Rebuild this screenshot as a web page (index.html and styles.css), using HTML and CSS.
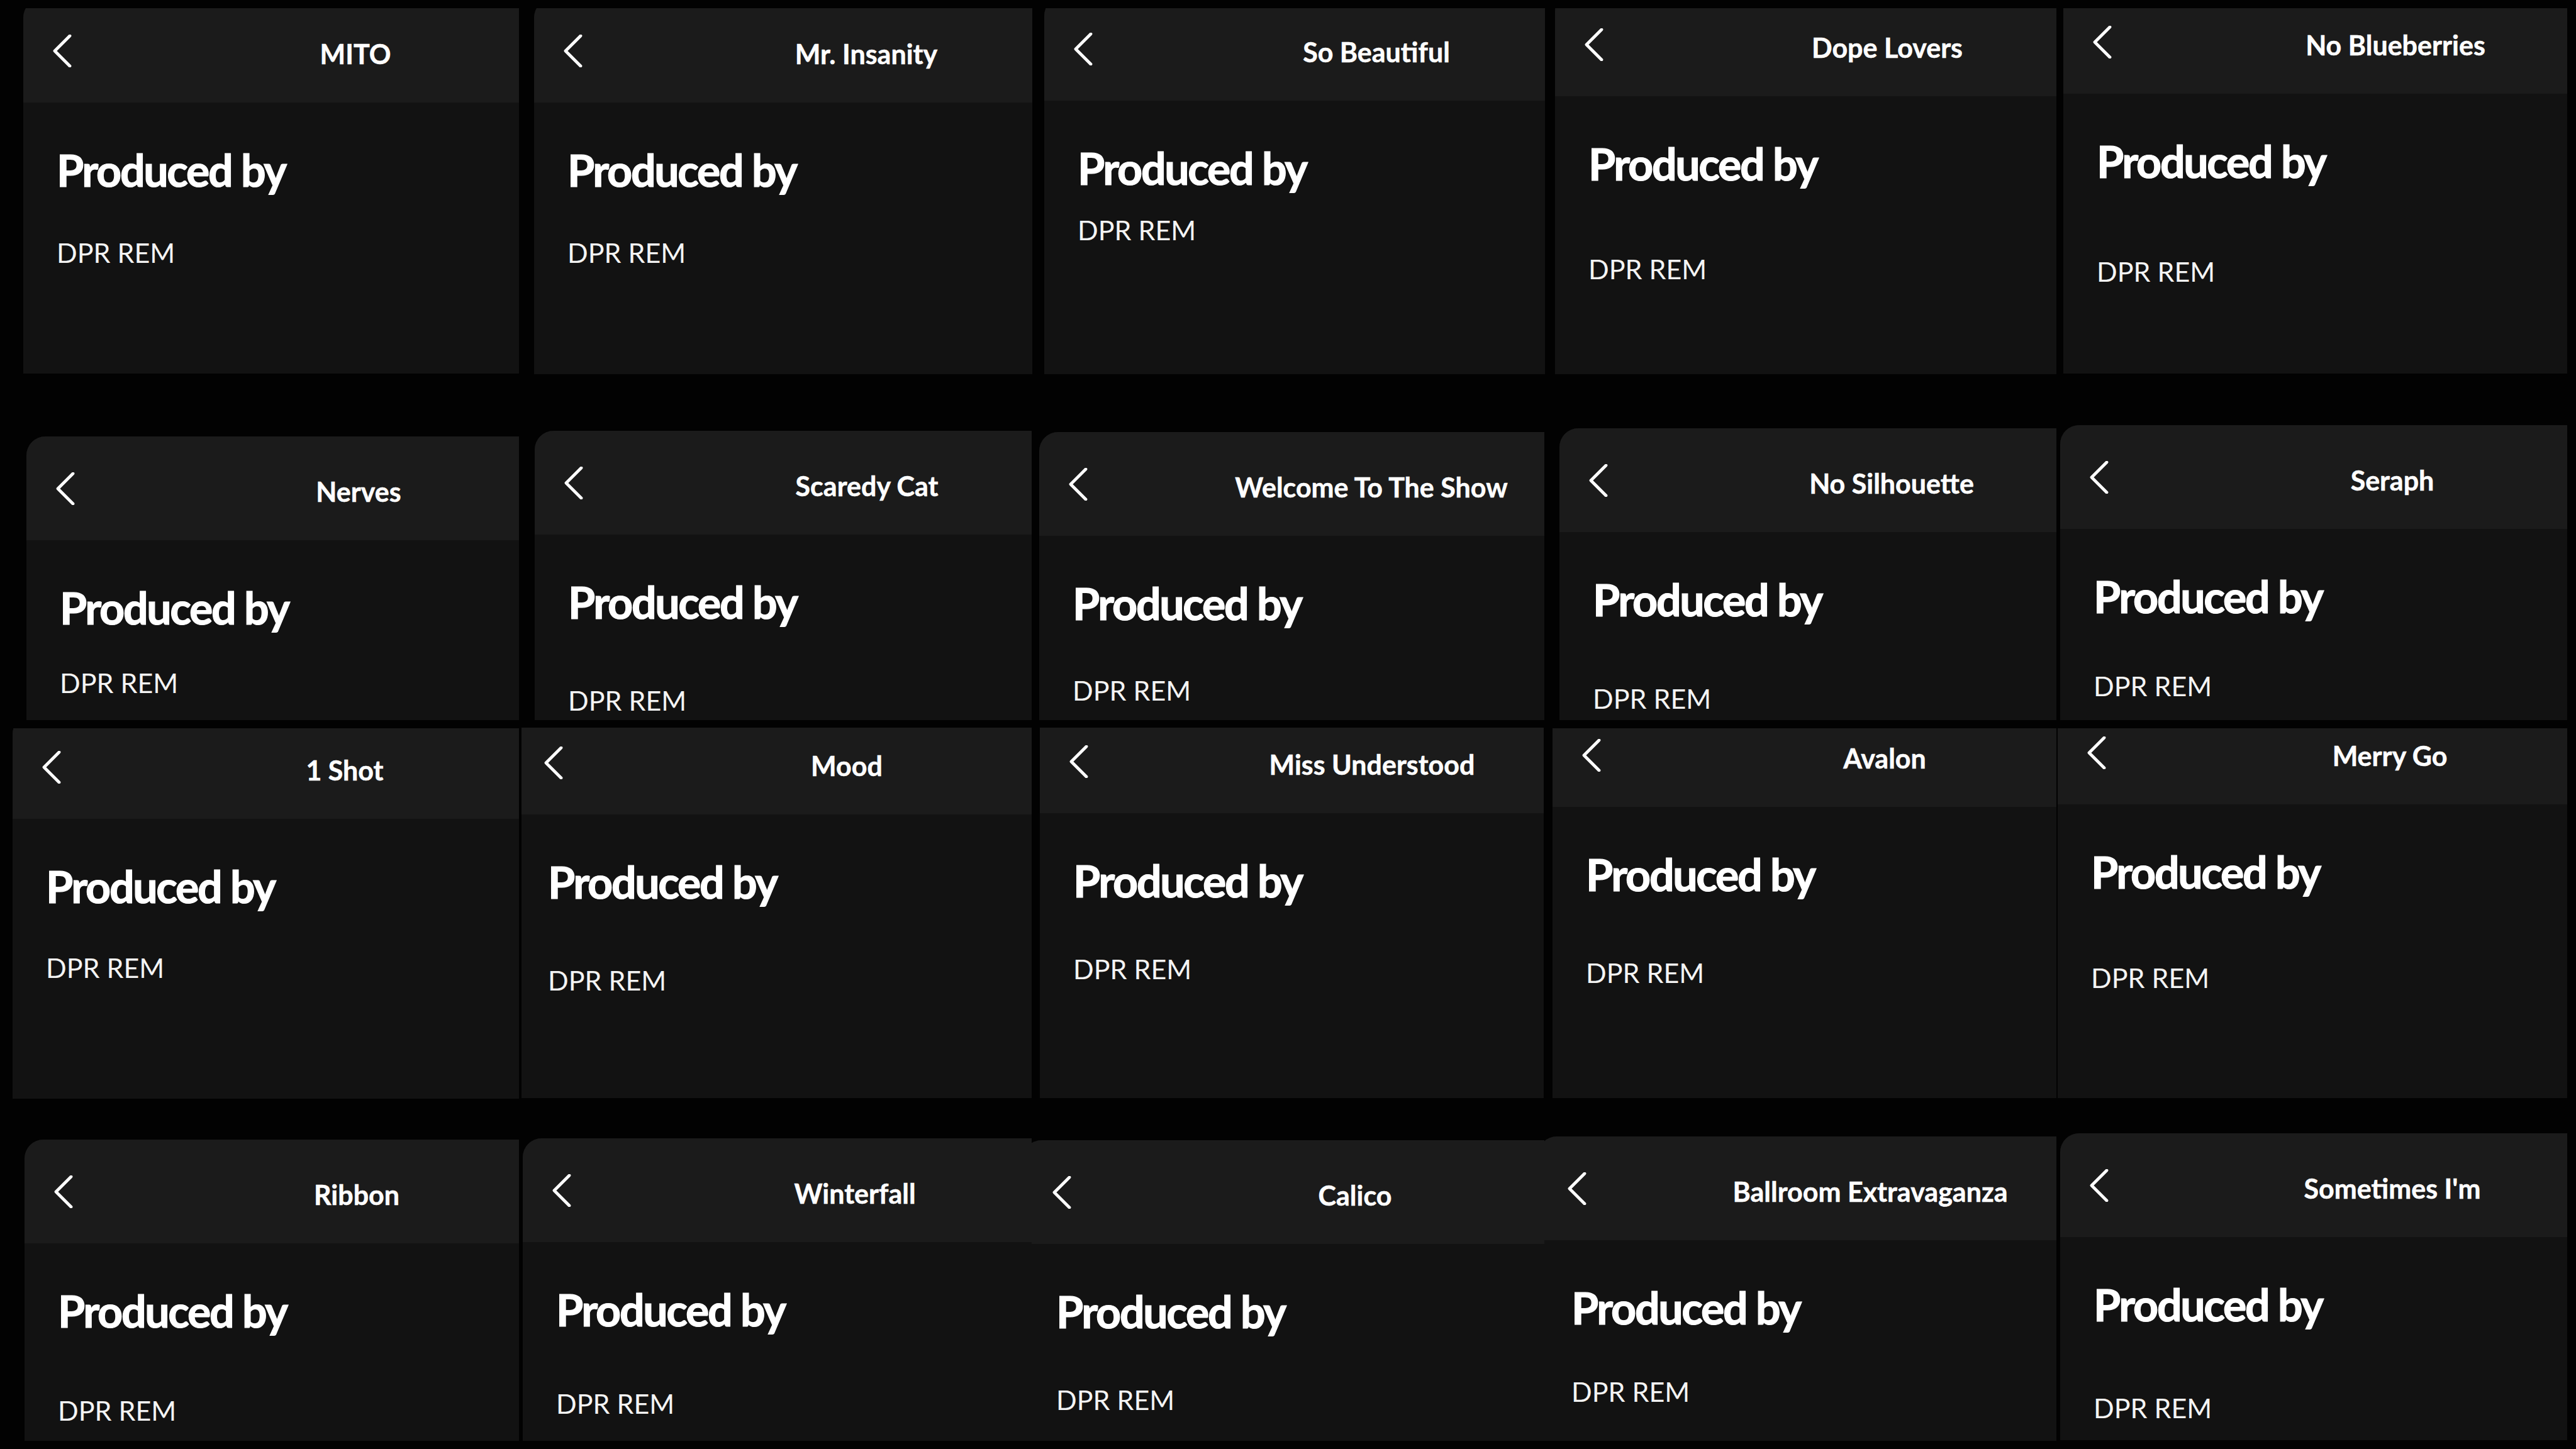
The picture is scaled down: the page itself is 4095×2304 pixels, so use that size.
FILE: index.html
```html
<!DOCTYPE html>
<html lang="en">
<head>
<meta charset="utf-8">
<title>Produced by — DPR REM</title>
<link rel="stylesheet" href="styles.css">
</head>
<body>
<main class="collage">
  <section class="shot" style="--x:37px;--y:13px;--w:788px;--h:581px;--cut-y:15px;--gap:90px">
    <div class="screen"><header class="bar"><svg class="back" viewBox="0 0 30 52"><polyline points="27,2 3,26 27,50"/></svg><h1 class="title">MITO</h1></header>
    <div class="content"><h2 class="heading">Produced by</h2><p class="credit">DPR REM</p></div></div>
  </section>
  <section class="shot" style="--x:849px;--y:13px;--w:792px;--h:582px;--cut-y:15px;--gap:90px">
    <div class="screen"><header class="bar"><svg class="back" viewBox="0 0 30 52"><polyline points="27,2 3,26 27,50"/></svg><h1 class="title">Mr. Insanity</h1></header>
    <div class="content"><h2 class="heading">Produced by</h2><p class="credit">DPR REM</p></div></div>
  </section>
  <section class="shot" style="--x:1660px;--y:13px;--w:796px;--h:582px;--cut-y:18px;--gap:57px">
    <div class="screen"><header class="bar"><svg class="back" viewBox="0 0 30 52"><polyline points="27,2 3,26 27,50"/></svg><h1 class="title">So Beautiful</h1></header>
    <div class="content"><h2 class="heading">Produced by</h2><p class="credit">DPR REM</p></div></div>
  </section>
  <section class="shot" style="--x:2472px;--y:13px;--w:797px;--h:582px;--cut-y:25px;--gap:126px">
    <div class="screen"><header class="bar"><svg class="back" viewBox="0 0 30 52"><polyline points="27,2 3,26 27,50"/></svg><h1 class="title">Dope Lovers</h1></header>
    <div class="content"><h2 class="heading">Produced by</h2><p class="credit">DPR REM</p></div></div>
  </section>
  <section class="shot" style="--x:3280px;--y:13px;--w:801px;--h:581px;--cut-y:29px;--gap:134px">
    <div class="screen"><header class="bar"><svg class="back" viewBox="0 0 30 52"><polyline points="27,2 3,26 27,50"/></svg><h1 class="title">No Blueberries</h1></header>
    <div class="content"><h2 class="heading">Produced by</h2><p class="credit">DPR REM</p></div></div>
  </section>

  <section class="shot" style="--x:42px;--y:694px;--w:783px;--h:451px;--gap:78px">
    <div class="screen"><header class="bar"><svg class="back" viewBox="0 0 30 52"><polyline points="27,2 3,26 27,50"/></svg><h1 class="title">Nerves</h1></header>
    <div class="content"><h2 class="heading">Produced by</h2><p class="credit">DPR REM</p></div></div>
  </section>
  <section class="shot" style="--x:850px;--y:685px;--w:790px;--h:460px;--gap:115px">
    <div class="screen"><header class="bar"><svg class="back" viewBox="0 0 30 52"><polyline points="27,2 3,26 27,50"/></svg><h1 class="title">Scaredy Cat</h1></header>
    <div class="content"><h2 class="heading">Produced by</h2><p class="credit">DPR REM</p></div></div>
  </section>
  <section class="shot" style="--x:1652px;--y:687px;--w:803px;--h:458px;--gap:97px">
    <div class="screen"><header class="bar"><svg class="back" viewBox="0 0 30 52"><polyline points="27,2 3,26 27,50"/></svg><h1 class="title">Welcome To The Show</h1></header>
    <div class="content"><h2 class="heading">Produced by</h2><p class="credit">DPR REM</p></div></div>
  </section>
  <section class="shot" style="--x:2479px;--y:681px;--w:790px;--h:464px;--gap:116px">
    <div class="screen"><header class="bar"><svg class="back" viewBox="0 0 30 52"><polyline points="27,2 3,26 27,50"/></svg><h1 class="title">No Silhouette</h1></header>
    <div class="content"><h2 class="heading">Produced by</h2><p class="credit">DPR REM</p></div></div>
  </section>
  <section class="shot" style="--x:3275px;--y:676px;--w:806px;--h:469px;--gap:101px">
    <div class="screen"><header class="bar"><svg class="back" viewBox="0 0 30 52"><polyline points="27,2 3,26 27,50"/></svg><h1 class="title">Seraph</h1></header>
    <div class="content"><h2 class="heading">Produced by</h2><p class="credit">DPR REM</p></div></div>
  </section>

  <section class="shot" style="--x:20px;--y:1158px;--w:805px;--h:589px;--cut-y:21px;--gap:88px">
    <div class="screen"><header class="bar"><svg class="back" viewBox="0 0 30 52"><polyline points="27,2 3,26 27,50"/></svg><h1 class="title">1 Shot</h1></header>
    <div class="content"><h2 class="heading">Produced by</h2><p class="credit">DPR REM</p></div></div>
  </section>
  <section class="shot" style="--x:829px;--y:1157px;--w:811px;--h:589px;--cut-x:11px;--cut-y:27px;--gap:115px">
    <div class="screen"><header class="bar"><svg class="back" viewBox="0 0 30 52"><polyline points="27,2 3,26 27,50"/></svg><h1 class="title">Mood</h1></header>
    <div class="content"><h2 class="heading">Produced by</h2><p class="credit">DPR REM</p></div></div>
  </section>
  <section class="shot" style="--x:1653px;--y:1157px;--w:801px;--h:589px;--cut-y:29px;--gap:99px">
    <div class="screen"><header class="bar"><svg class="back" viewBox="0 0 30 52"><polyline points="27,2 3,26 27,50"/></svg><h1 class="title">Miss Understood</h1></header>
    <div class="content"><h2 class="heading">Produced by</h2><p class="credit">DPR REM</p></div></div>
  </section>
  <section class="shot" style="--x:2468px;--y:1158px;--w:801px;--h:588px;--cut-y:40px;--gap:115px">
    <div class="screen"><header class="bar"><svg class="back" viewBox="0 0 30 52"><polyline points="27,2 3,26 27,50"/></svg><h1 class="title">Avalon</h1></header>
    <div class="content"><h2 class="heading">Produced by</h2><p class="credit">DPR REM</p></div></div>
  </section>
  <section class="shot" style="--x:3271px;--y:1158px;--w:810px;--h:588px;--cut-y:44px;--gap:127px">
    <div class="screen"><header class="bar"><svg class="back" viewBox="0 0 30 52"><polyline points="27,2 3,26 27,50"/></svg><h1 class="title">Merry Go</h1></header>
    <div class="content"><h2 class="heading">Produced by</h2><p class="credit">DPR REM</p></div></div>
  </section>

  <section class="shot" style="--x:39px;--y:1812px;--w:786px;--h:479px;--gap:117px">
    <div class="screen"><header class="bar"><svg class="back" viewBox="0 0 30 52"><polyline points="27,2 3,26 27,50"/></svg><h1 class="title">Ribbon</h1></header>
    <div class="content"><h2 class="heading">Produced by</h2><p class="credit">DPR REM</p></div></div>
  </section>
  <section class="shot" style="--x:831px;--y:1810px;--w:809px;--h:481px;--gap:108px">
    <div class="screen"><header class="bar"><svg class="back" viewBox="0 0 30 52"><polyline points="27,2 3,26 27,50"/></svg><h1 class="title">Winterfall</h1></header>
    <div class="content"><h2 class="heading">Produced by</h2><p class="credit">DPR REM</p></div></div>
  </section>
  <section class="shot" style="--x:1640px;--y:1813px;--w:815px;--h:478px;--cut-x:14px;--gap:99px">
    <div class="screen"><header class="bar"><svg class="back" viewBox="0 0 30 52"><polyline points="27,2 3,26 27,50"/></svg><h1 class="title">Calico</h1></header>
    <div class="content"><h2 class="heading">Produced by</h2><p class="credit">DPR REM</p></div></div>
  </section>
  <section class="shot" style="--x:2455px;--y:1807px;--w:814px;--h:484px;--cut-x:10px;--gap:92px">
    <div class="screen"><header class="bar"><svg class="back" viewBox="0 0 30 52"><polyline points="27,2 3,26 27,50"/></svg><h1 class="title">Ballroom Extravaganza</h1></header>
    <div class="content"><h2 class="heading">Produced by</h2><p class="credit">DPR REM</p></div></div>
  </section>
  <section class="shot" style="--x:3275px;--y:1802px;--w:806px;--h:488px;--gap:123px">
    <div class="screen"><header class="bar"><svg class="back" viewBox="0 0 30 52"><polyline points="27,2 3,26 27,50"/></svg><h1 class="title">Sometimes I'm</h1></header>
    <div class="content"><h2 class="heading">Produced by</h2><p class="credit">DPR REM</p></div></div>
  </section>
</main>
</body>
</html>
```

FILE: styles.css
```css
html, body {
  margin: 0;
  padding: 0;
  background: #020202;
}

body {
  width: 4095px;
  height: 2304px;
  overflow: hidden;
  font-family: Lato, "Liberation Sans", "DejaVu Sans", sans-serif;
  color: #ffffff;
}

.collage {
  position: relative;
  width: 4095px;
  height: 2304px;
  background: #020202;
}

/* each screenshot is pinned on the collage canvas */
.shot {
  position: absolute;
  left: var(--x);
  top: var(--y);
  width: var(--w);
  height: var(--h);
  overflow: hidden;
}

.screen {
  width: 1056px;
  height: 1000px;
  margin-left: calc(-1 * var(--cut-x, 0px));
  margin-top: calc(-1 * var(--cut-y, 0px));
  background: #121212;
  border-radius: 30px 30px 0 0;
  overflow: hidden;
}

.bar {
  height: 165px;
  background: #1b1b1b;
  display: grid;
  grid-template-columns: 1fr;
  grid-template-rows: 1fr;
  align-items: center;
}

.back {
  grid-area: 1 / 1;
  justify-self: start;
  margin-left: 47px;
  width: 30px;
  height: 52px;
  fill: none;
  stroke: #ffffff;
  stroke-width: 4.8;
  stroke-linecap: round;
  stroke-linejoin: round;
}

.title {
  grid-area: 1 / 1;
  justify-self: center;
  margin: 10px 0 0 0;
  font-size: 43px;
  font-weight: 700;
  line-height: 1.2;
  letter-spacing: 0;
  white-space: nowrap;
  -webkit-text-stroke: 0.5px #ffffff;
}

.content {
  padding: 72px 0 0 53px;
}

.heading {
  margin: 0;
  font-size: 70px;
  font-weight: 700;
  line-height: 1;
  letter-spacing: -2.4px;
  white-space: nowrap;
  -webkit-text-stroke: 1.2px #ffffff;
}

.credit {
  margin: calc(var(--gap) - 15px) 0 0 0;
  font-size: 43px;
  font-weight: 400;
  line-height: 1;
  color: #f4f4f4;
  white-space: nowrap;
}
```
